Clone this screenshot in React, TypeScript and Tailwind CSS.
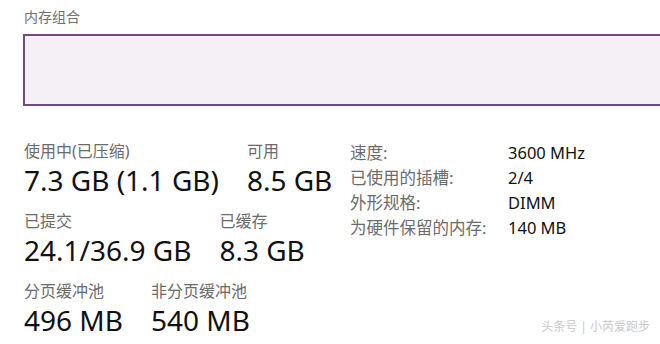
const font = { fontFamily: '"Noto Sans", "Noto Sans CJK SC", sans-serif' }

type Stat = { label: string; value: string }

const rows: Stat[][] = [
  [
    { label: '使用中(已压缩)', value: '7.3 GB (1.1 GB)' },
    { label: '可用', value: '8.5 GB' },
  ],
  [
    { label: '已提交', value: '24.1/36.9 GB' },
    { label: '已缓存', value: '8.3 GB' },
  ],
  [
    { label: '分页缓冲池', value: '496 MB' },
    { label: '非分页缓冲池', value: '540 MB' },
  ],
]

const specs = [
  ['速度:', '3600 MHz'],
  ['已使用的插槽:', '2/4'],
  ['外形规格:', 'DIMM'],
  ['为硬件保留的内存:', '140 MB'],
]

export default function App() {
  return (
    <div className="relative w-[660px] h-[344px] overflow-hidden bg-white" style={font}>
      <div className="pt-[7px] pl-[24px] text-[14px] leading-[20px] text-[#707070]">内存组合</div>
      <div className="mt-[7px] ml-[23px] h-[72px] w-[700px] border-2 border-r-0 border-[#74497f] bg-[#f4f0f6]" />

      <div className="flex pl-[24px] pt-[34px]">
        <div className="flex w-[326px] flex-col gap-[12px]">
          {rows.map((row, i) => (
            <div key={i} className="flex gap-[28px]">
              {row.map((s) => (
                <div key={s.label} className="flex flex-col">
                  <span className="text-[16px] leading-[22px] text-[#6b6b6b]">{s.label}</span>
                  <span className="text-[28px] leading-[36px] text-[#111]">{s.value}</span>
                </div>
              ))}
            </div>
          ))}
        </div>

        <div className="flex flex-col pt-[-2px]">
          {specs.map(([k, v]) => (
            <div key={k} className="flex text-[16.5px] leading-[25px]">
              <span className="w-[158px] text-[#6b6b6b]">{k}</span>
              <span className="text-[#111]">{v}</span>
            </div>
          ))}
        </div>
      </div>

      <div className="absolute right-[10px] bottom-[9px] text-[12px] leading-[16px] text-[#c9c9c9]">
        头条号 | 小芮爱跑步
      </div>
    </div>
  )
}
